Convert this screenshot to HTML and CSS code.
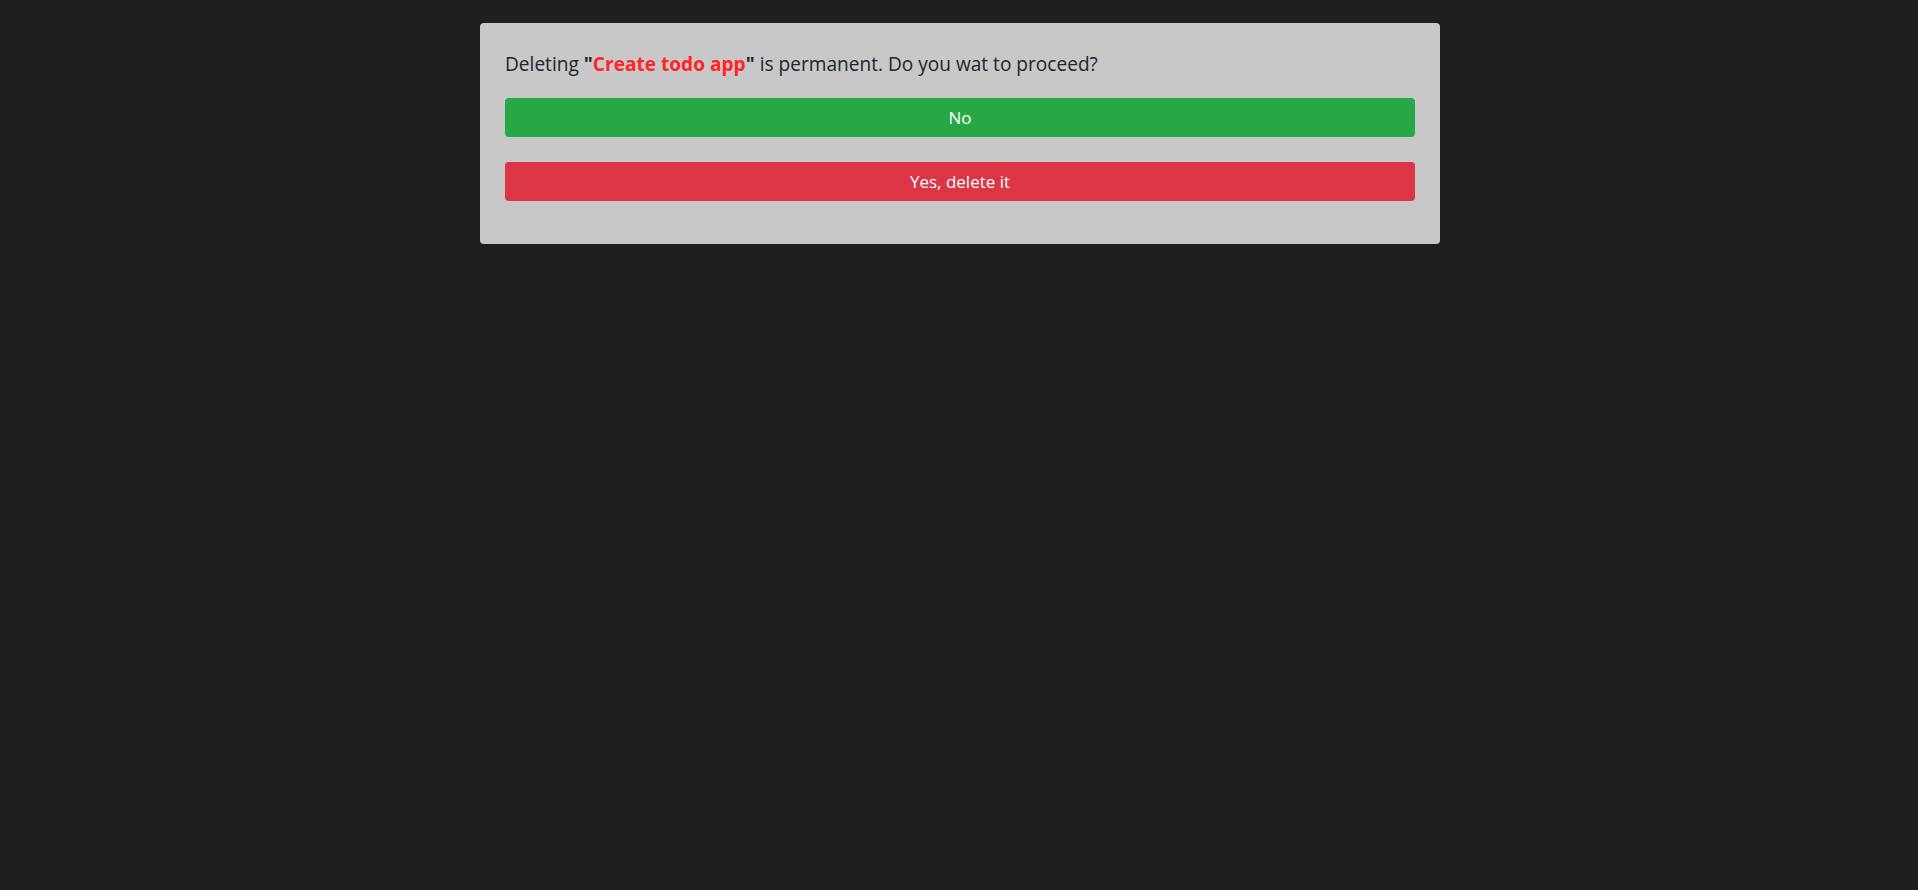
FILE: index.html
```html
<!DOCTYPE html>
<html lang="en">
<head>
<meta charset="utf-8">
<title>Delete todo</title>
<link rel="stylesheet" href="styles.css">
</head>
<body>
<div class="page">
  <div class="card">
    <p class="message">Deleting <b>"<span class="name">Create todo app</span>"</b> is permanent. Do you wat to proceed?</p>
    <button class="btn btn-no">No</button>
    <button class="btn btn-yes">Yes, delete it</button>
  </div>
</div>
</body>
</html>
```
FILE: styles.css
```css
html, body {
  margin: 0;
  padding: 0;
  background: #1f1f1f;
  height: 100%;
}
body {
  font-family: "Open Sans", "Noto Sans", sans-serif;
  color: #212529;
}
.page {
  display: flex;
  justify-content: center;
  padding-top: 23px;
  padding-left: 2px;
}
.card {
  width: 960px;
  box-sizing: border-box;
  background: #c8c8c8;
  border-radius: 4px;
  padding: 25px 25px 18px;
  display: flex;
  flex-direction: column;
}
.message {
  margin: 1px 0 19px;
  font-size: 19.1px;
  line-height: 30px;
}
.message b { font-weight: 700; }
.name { color: #ff2424; }
.btn {
  border: none;
  border-radius: 4px;
  height: 39px;
  font-family: inherit;
  font-size: 17px;
  color: #fff;
  margin-bottom: 25px;
  padding: 0 12px;
  cursor: pointer;
}
.btn-no { background: #28a745; }
.btn-yes { background: #dc3545; }
```
